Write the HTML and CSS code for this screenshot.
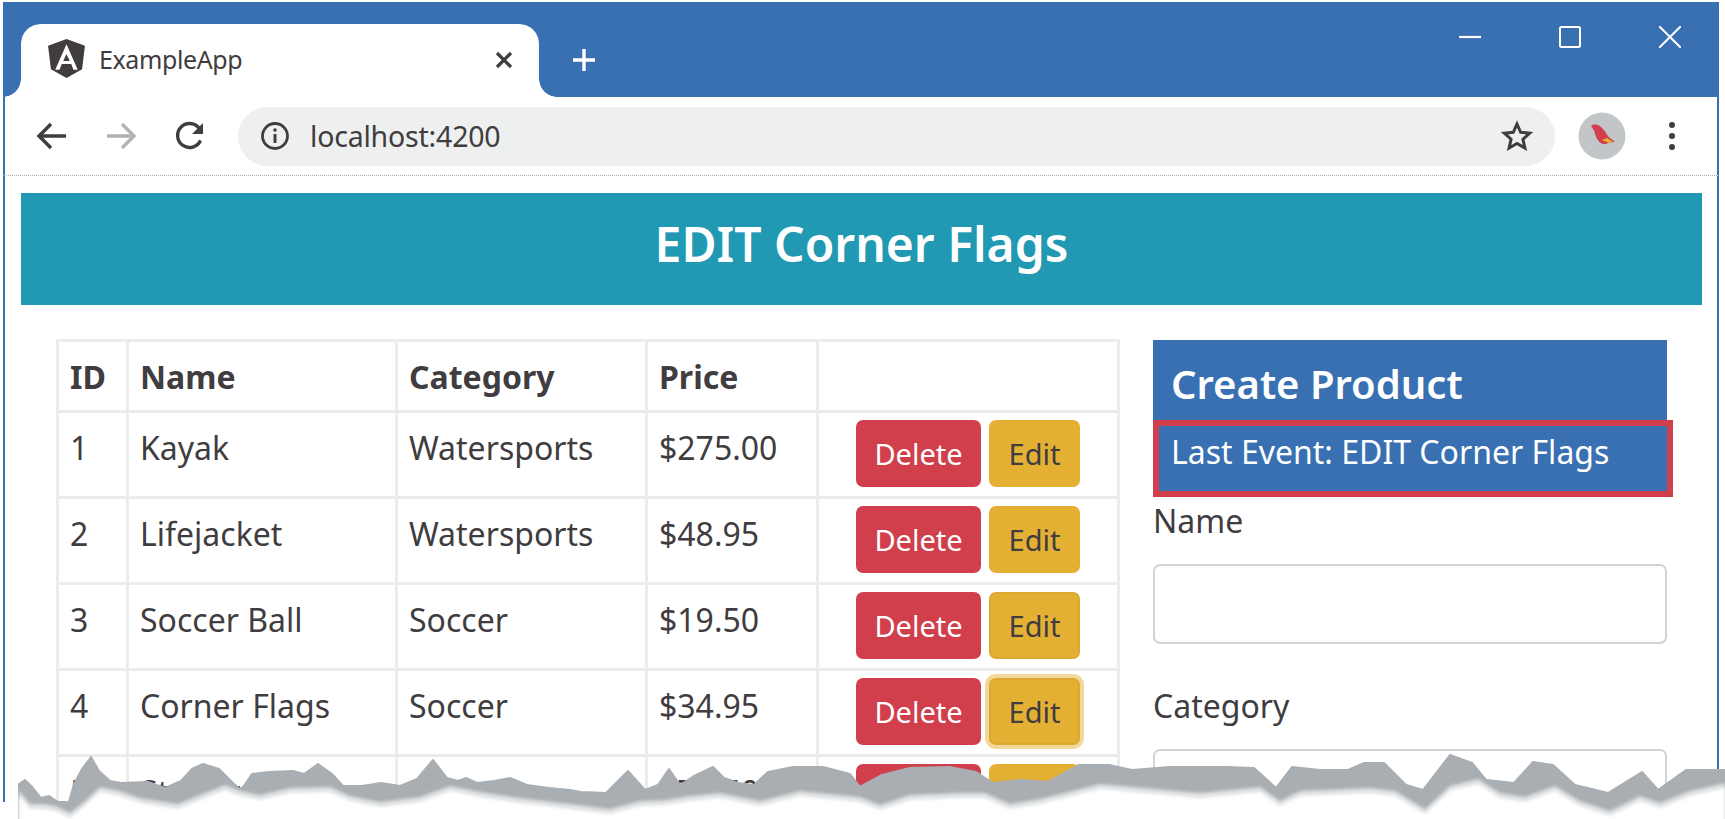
FILE: index.html
```html
<!DOCTYPE html>
<html lang="en">
<head>
<meta charset="utf-8">
<title>ExampleApp</title>
<link rel="stylesheet" href="styles.css">
</head>
<body>
<div class="window">
  <!-- browser chrome -->
  <header class="titlebar">
    <div class="tab">
      <svg class="tab-logo" viewBox="0 0 40 40"><path fill="#403c40" fill-rule="evenodd" d="M20 1 2 7.5l2.8 23L20 39l15.200-8.500L38 7.500zM20 6l11 25h-4.200l-2.200-5.600h-9.200L13.200 31H9zm0 9.500-3.200 7h6.400z"/></svg>
      <span class="tab-title">ExampleApp</span>
      <svg class="tab-close" viewBox="0 0 20 20"><path d="M3 3l14 14M17 3 3 17" stroke="#403c40" stroke-width="3.200" fill="none"/></svg>
    </div>
    <svg class="new-tab" viewBox="0 0 24 24"><path d="M12 1v22M1 12h22" stroke="#fff" stroke-width="3.400" fill="none"/></svg>
    <div class="win-controls">
      <svg viewBox="0 0 22 22"><path d="M0 11h22" stroke="#fff" stroke-width="2.200"/></svg>
      <svg viewBox="0 0 22 22"><rect x="1" y="1" width="20" height="20" rx="1.500" stroke="#fff" stroke-width="2" fill="none"/></svg>
      <svg viewBox="0 0 22 22"><path d="M0 0l22 22M22 0 0 22" stroke="#fff" stroke-width="2" fill="none"/></svg>
    </div>
  </header>

  <nav class="toolbar">
    <svg class="nav-icon" viewBox="0 0 32 32"><path d="M30 16H4M15 4 3 16l12 12" stroke="#403c40" stroke-width="3.400" fill="none"/></svg>
    <svg class="nav-icon" viewBox="0 0 32 32"><path d="M2 16h26M17 4l12 12-12 12" stroke="#aeb3b7" stroke-width="3.400" fill="none"/></svg>
    <svg class="nav-icon" viewBox="0 0 32 32"><path d="M26.500 20.500A12 12 0 1 1 25 8" stroke="#403c40" stroke-width="3.400" fill="none"/><path d="M29 3v11H18z" fill="#403c40"/></svg>
    <div class="omnibox">
      <svg class="info" viewBox="0 0 30 30"><circle cx="15" cy="15" r="12.500" stroke="#403c40" stroke-width="2.800" fill="none"/><path d="M15 13v9" stroke="#403c40" stroke-width="3"/><circle cx="15" cy="9" r="1.800" fill="#403c40"/></svg>
      <span class="url">localhost:4200</span>
      <svg class="star" viewBox="0 0 32 32"><path d="M16 4l3.700 8.300 9 .9-6.800 6 2 8.800L16 23.400 8.100 28l2-8.800-6.800-6 9-.9z" stroke="#403c40" stroke-width="3" fill="none"/></svg>
    </div>
    <svg class="avatar" viewBox="0 0 48 48"><circle cx="24" cy="24" r="23.500" fill="#c3c6c8"/><path d="M13 14c4-3 9-1 12 3 3 3 5 8 7 9l5 4-6 .500-3 1.500c-5 1-8-3-10-7-1-4-2-7-5-11z" fill="#d13f4c"/><path d="M24 28l7 3 4-1-6-4z" fill="#e3b034"/></svg>
    <svg class="menu" viewBox="0 0 8 30"><circle cx="4" cy="4" r="3" fill="#403c40"/><circle cx="4" cy="15" r="3" fill="#403c40"/><circle cx="4" cy="26" r="3" fill="#403c40"/></svg>
  </nav>

  <!-- the app -->
  <main class="page">
    <div class="banner">EDIT Corner Flags</div>
    <div class="content">
      <table class="products">
        <thead>
          <tr><th class="c-id">ID</th><th class="c-name">Name</th><th class="c-cat">Category</th><th class="c-price">Price</th><th class="c-act"></th></tr>
        </thead>
        <tbody>
          <tr><td>1</td><td>Kayak</td><td>Watersports</td><td>$275.00</td><td class="actions"><button class="btn del">Delete</button><button class="btn edit">Edit</button></td></tr>
          <tr><td>2</td><td>Lifejacket</td><td>Watersports</td><td>$48.95</td><td class="actions"><button class="btn del">Delete</button><button class="btn edit">Edit</button></td></tr>
          <tr><td>3</td><td>Soccer Ball</td><td>Soccer</td><td>$19.50</td><td class="actions"><button class="btn del">Delete</button><button class="btn edit hovered">Edit</button></td></tr>
          <tr><td>4</td><td>Corner Flags</td><td>Soccer</td><td>$34.95</td><td class="actions"><button class="btn del">Delete</button><button class="btn edit focused">Edit</button></td></tr>
          <tr><td>5</td><td>Stadium</td><td>Soccer</td><td>$79,500.00</td><td class="actions"><button class="btn del">Delete</button><button class="btn edit">Edit</button></td></tr>
        </tbody>
      </table>

      <form class="editor">
        <h3 class="editor-head">Create Product</h3>
        <div class="last-event">Last Event: EDIT Corner Flags</div>
        <label class="field-label">Name</label>
        <input class="field" type="text">
        <label class="field-label second">Category</label>
        <input class="field" type="text">
      </form>
    </div>
  </main>

  <!-- torn paper edge along the bottom of the shot -->
  <svg class="tear" viewBox="0 0 1725 819">
    <defs>
      <polygon id="under" points="19,790 30,803 45,803 58,806 70,812 85,800 100,786 120,790 140,797 178,803 200,794 225,784 240,790 260,794 290,787 330,786 350,795 380,801 420,796 450,785 480,791 520,797 570,803 610,808 640,800 665,799 690,795 720,792 760,800 800,790 860,796 880,804 910,794 960,792 985,792 1010,803 1040,798 1100,783 1200,792 1260,786 1280,800 1300,790 1370,787 1395,790 1425,808 1450,785 1478,778 1500,792 1525,796 1555,785 1580,800 1610,810 1640,795 1660,802 1690,790 1725,782 1725,830 19,830"/>
      <filter id="soft"><feGaussianBlur stdDeviation="1.500"/></filter>
    </defs>
    <rect x="0" y="802" width="20" height="17" fill="#fff"/>
    <polygon fill="#a9aeb3" stroke="#a9aeb3" stroke-width="2" stroke-linejoin="round" points="19,784 25,780 33,788 41,798 49,796 58,802 69,802 74,784 82,769 91,757 99,771 110,781 121,783 148,782 165,788 181,781 192,769 203,764 219,769 233,783 241,790 252,774 269,772 293,771 304,774 318,764 332,774 343,786 362,786 381,783 400,786 417,779 433,760 447,778 458,781 466,778 477,783 494,781 510,778 527,785 549,788 570,790 581,792 606,793 628,771 645,790 658,785 669,769 680,785 694,776 713,767 724,778 738,783 754,785 768,772 793,767 823,767 850,774 860,787 882,775 910,768 949,767 976,772 993,783 1021,780 1048,782 1079,765 1109,765 1132,770 1170,767 1226,767 1254,768 1276,788 1292,767 1320,770 1348,770 1364,763 1384,763 1406,785 1423,790 1450,755 1472,763 1486,780 1514,783 1533,762 1553,765 1575,785 1608,793 1642,772 1658,790 1686,770 1725,770 1725,819 19,819"/>
    <use href="#under" y="1" fill="#dfe1e2" filter="url(#soft)"/>
    <use href="#under" y="6" fill="#fff" filter="url(#soft)"/>
  </svg>
</div>
</body>
</html>
```

FILE: styles.css
```css
*{box-sizing:border-box}
:root{
  --blue:#3870b2;
  --teal:#2199b3;
  --red:#d13f4c;
  --yellow:#e3b034;
  --ink:#403c40;
  --line:#ebeded;
}
html,body{margin:0;height:100%;background:#fff;overflow:hidden}
body{font-family:"Noto Sans","Open Sans",Arial,sans-serif;color:var(--ink)}

.window{position:relative;height:819px;padding:2px 6px 0 3px;overflow:hidden}

/* ---------- title bar ---------- */
.titlebar{height:95px;background:var(--blue);display:flex;align-items:flex-start;padding:22px 0 0 18px}
.tab{
  position:relative;width:518px;height:73px;background:#fff;border-radius:20px 20px 0 0;
  display:flex;align-items:center;padding:0 25px 0 25px;
}
.tab::before,.tab::after{content:"";position:absolute;bottom:0;width:18px;height:18px}
.tab::before{left:-18px;background:radial-gradient(circle at 0 0,var(--blue) 17.500px,#fff 18px)}
.tab::after{right:-18px;background:radial-gradient(circle at 100% 0,var(--blue) 17.500px,#fff 18px)}
.tab-logo{width:41px;height:41px;margin-top:-4px}
.tab-title{font-size:25px;margin-left:12px;flex:1;margin-top:-3px;letter-spacing:-.4px}
.tab-close{width:20px;height:20px;margin-top:-2px}
.new-tab{width:24px;height:24px;margin:24px 0 0 33px}
.win-controls{margin-left:auto;display:flex;gap:78px;padding:2px 38px 0 0}
.win-controls svg{width:22px;height:22px;display:block}

/* ---------- toolbar ---------- */
.toolbar{
  height:79px;display:flex;align-items:center;padding:0 0 0 31px;
  border-bottom:1.500px dotted #a9aeb3;border-left:2px solid var(--blue);border-right:2px solid var(--blue);
}
.nav-icon{width:32px;height:32px;margin-right:37px;flex:none}
.omnibox{
  width:1317px;height:59px;margin-left:-5px;background:#eef0f0;border-radius:30px;
  display:flex;align-items:center;padding:0 22px 0 22px;
}
.info{width:30px;height:30px}
.url{font-size:28.500px;margin-left:20px;flex:1;letter-spacing:-.2px}
.star{width:32px;height:32px}
.avatar{width:48px;height:48px;margin-left:23px;flex:none}
.menu{width:8px;height:30px;margin-left:42px;flex:none}

/* ---------- page ---------- */
.page{border-left:2px solid var(--blue);border-right:2px solid var(--blue);padding:17px 15px 0 16px}
.banner{
  height:112px;background:var(--teal);color:#fff;font-size:48px;font-weight:600;
  display:flex;align-items:center;justify-content:center;padding-bottom:12px;
}
.content{display:flex;align-items:flex-start;gap:33px;padding:34px 0 0 35px}

.products{border-collapse:collapse;table-layout:fixed;width:1064px;font-size:32px;flex:none}
.products th,.products td{border:3px solid var(--line);padding:0 11px;vertical-align:top;text-align:left}
.products th{height:71px;font-weight:700;vertical-align:middle}
.products td{height:86px;padding-top:13px}
.c-id{width:70px}
.c-name{width:269px}
.c-cat{width:250px}
.c-price{width:171px}
.products td.actions{padding:7px 0 0;text-align:center;white-space:nowrap}

.btn{
  font:inherit;font-size:29px;height:67px;border:2px solid transparent;border-radius:7px;padding:0;
  vertical-align:top;
}
.del{width:125px;background:var(--red);color:#fff;margin-right:8px}
.edit{width:91px;background:var(--yellow);color:var(--ink)}
.edit.hovered{border-color:#dba92f}
.edit.focused{border-color:#dba92f;box-shadow:0 0 0 4px rgba(227,176,52,.5)}

.editor{width:514px;flex:none;font-size:32px;margin-top:1px}
.editor-head{
  margin:0;height:80px;background:var(--blue);color:#fff;font-size:40px;font-weight:600;
  display:flex;align-items:center;padding:6px 18px 0;
}
.last-event{
  width:520px;height:77px;background:var(--blue);color:#fff;border:6px solid var(--red);
  padding:3px 12px;line-height:46px;
}
.field-label{display:block;line-height:48px}
.field-label.second{margin-top:38px}
.field{display:block;width:100%;height:80px;margin-top:19px;border:2px solid #ced4da;border-radius:7px;background:#fff}

.tear{position:absolute;left:0;top:0;width:1725px;height:819px;pointer-events:none}
```
